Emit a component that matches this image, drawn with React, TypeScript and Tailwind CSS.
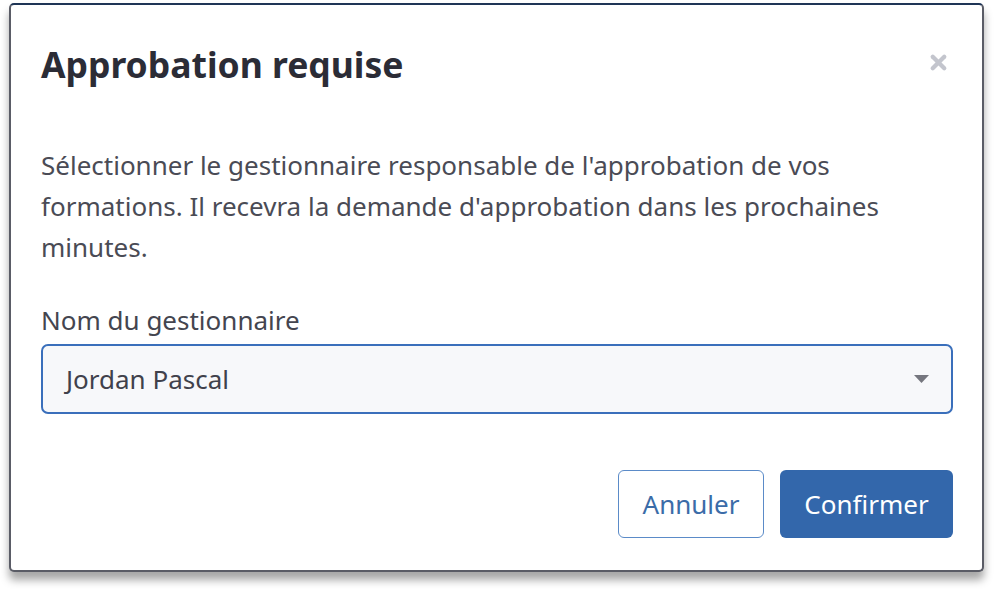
import { X } from 'lucide-react';

export default function App() {
  return (
    <div className="w-[994px] h-[589px] bg-white overflow-hidden" style={{ fontFamily: '"Noto Sans", "Open Sans", sans-serif' }}>
      {/* modale d'approbation */}
      <div className="ml-[9px] mt-[3px] w-[975px] h-[569px] bg-white border-2 border-[#5a5c66] border-t-[#1f3556] rounded-[5px] shadow-[0_8px_8px_rgba(0,0,0,0.35)] px-[30px] pt-[38px]">
        <div className="flex items-center justify-between">
          <h2 className="text-[35.5px] leading-[42px] font-bold text-[#2b2c36]">Approbation requise</h2>
          <button className="mr-[2px] mb-[4px] text-[#c3c5cd]">
            <X size={23} strokeWidth={4.5} />
          </button>
        </div>

        <p className="mt-[60px] w-[912px] text-[26px] leading-[41px] text-[#4a4b55]">
          Sélectionner le gestionnaire responsable de l'approbation de vos formations. Il recevra la demande d'approbation dans les prochaines minutes.
        </p>

        <label className="block mt-[36px] text-[26px] leading-[32px] text-[#44454f]">Nom du gestionnaire</label>
        <div className="mt-[8px] w-[912px] h-[70px] rounded-[7px] border-[2.5px] border-[#3a6fbb] bg-[#f7f8fa] flex items-center justify-between pl-[23px] pr-[22px]">
          <span className="text-[26px] text-[#40414b]">Jordan Pascal</span>
          <svg width="15" height="8" viewBox="0 0 15 8">
            <path d="M0 0 L15 0 L7.5 8 Z" fill="#75767e" />
          </svg>
        </div>

        <div className="mt-[56px] flex justify-end gap-[16px] w-[912px]">
          <button className="w-[146px] h-[68px] rounded-[6px] border-[1.5px] border-[#5b8bc8] text-[#3b6ca8] text-[26px]">Annuler</button>
          <button className="w-[173px] h-[68px] rounded-[6px] bg-[#3367ab] text-white text-[26px]">Confirmer</button>
        </div>
      </div>
    </div>
  );
}
